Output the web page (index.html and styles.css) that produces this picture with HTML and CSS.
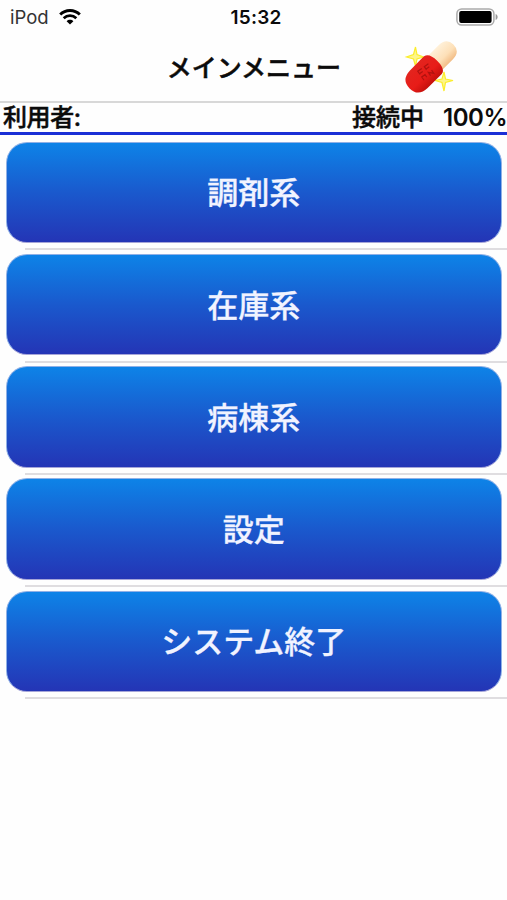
FILE: index.html
```
<!DOCTYPE html>
<html lang="ja">
<head>
    <meta charset="UTF-8">
    <meta name="viewport" content="width=device-width, initial-scale=1.0">
    <title>メインメニュー</title>
    <link rel="stylesheet" href="styles.css">
</head>
<body>
    <!-- ステータスバー -->
    <div class="status-bar">
        <div class="carrier">
            <span>iPod</span>
            <svg class="wifi" width="22" height="16" viewBox="0 0 22 16">
                <path d="M1.2 5.6C6.5 .1 15.5 .1 20.8 5.6" fill="none" stroke="#000" stroke-width="2.9"/>
                <path d="M4.7 9.3C8.2 5.8 13.8 5.8 17.3 9.3" fill="none" stroke="#000" stroke-width="2.7"/>
                <path d="M7.6 12.2C9.5 10.4 12.5 10.4 14.4 12.2L11 15.6Z"/>
            </svg>
        </div>
        <span class="clock">15:32</span>
        <svg class="battery" width="43" height="18" viewBox="0 0 43 18">
            <rect x=".9" y=".9" width="37" height="16.2" rx="4.8" fill="#fff" stroke="#aaa" stroke-width="1.5"/>
            <rect x="3.2" y="3" width="32.4" height="12" rx="2"/>
            <path d="M39.6 6C42.3 7 42.3 11 39.6 12Z" fill="#999"/>
        </svg>
    </div>

    <!-- タイトル -->
    <header class="header">
        <h1 class="title">メインメニュー</h1>
        <svg class="capsule" width="56" height="54" viewBox="0 0 56 54">
            <defs>
                <linearGradient id="cream" x1="0" y1="0" x2="0" y2="1">
                    <stop offset="0" stop-color="#fff0d8"/>
                    <stop offset=".6" stop-color="#fde0b8"/>
                    <stop offset="1" stop-color="#f2bd86"/>
                </linearGradient>
                <linearGradient id="red" x1="0" y1="0" x2="0" y2="1">
                    <stop offset="0" stop-color="#e3241e"/>
                    <stop offset=".6" stop-color="#e81c18"/>
                    <stop offset="1" stop-color="#c4100c"/>
                </linearGradient>
            </defs>
            <path class="star" d="M12.5 6L14 13.5L20.5 16L14 18L12.5 25L10.5 18L3.5 16L10.5 13.5Z"/>
            <path class="star" d="M41 31L42.5 38L50 39.5L42.5 41.5L41 50L39 41.5L32 39.5L39 38Z"/>
            <g transform="translate(28.5 25.5) rotate(-45)">
                <path d="M0 -10H20Q31 -10 31 0Q31 10 20 10H0Z" fill="url(#cream)"/>
                <path d="M-1 -12.5H2Q8 -11 8 0Q8 12 2 12.5H-18Q-31 12 -31 0Q-31 -12 -18 -12.5Z" fill="url(#red)"/>
                <path d="M-14 0V-4H-9M-14 -1H-10M-6 0V-4H-1M-6 -1H-2M-14 7V3H-10V6M-6 7V3L-2 7V3" transform="rotate(10)" fill="none" stroke="#b0120f" stroke-width="1.2"/>
            </g>
        </svg>
    </header>

    <div class="user-bar">
        <span class="user">利用者:</span>
        <span class="connection">接続中</span>
        <span class="charge">100%</span>
    </div>

    <!-- メニュー -->
    <main class="menu">
        <div class="menu-row"><button class="menu-button">調剤系</button></div>
        <div class="menu-row"><button class="menu-button">在庫系</button></div>
        <div class="menu-row"><button class="menu-button">病棟系</button></div>
        <div class="menu-row"><button class="menu-button">設定</button></div>
        <div class="menu-row"><button class="menu-button">システム終了</button></div>
    </main>
</body>
</html>
```
FILE: styles.css
```
* {
    box-sizing: border-box;
}
body {
    margin: 0;
    min-height: 100vh;
    background-color: #fefefe;
    color: #0b0b0b;
    font-family: Inter, "Noto Sans CJK JP", sans-serif;
}
.status-bar {
    display: grid;
    grid-template-columns: 1fr auto 1fr;
    align-items: center;
    height: 34px;
    padding: 0 8px 0 10px;
}
.carrier {
    display: flex;
    align-items: center;
    gap: 10px;
    font-size: 18.5px;
    color: #333;
}
.wifi {
    margin-top: -1px;
}
.clock {
    font-size: 19px;
    font-weight: 600;
    letter-spacing: 0.2px;
    padding-left: 3px;
}
.battery {
    justify-self: end;
}
.header {
    display: grid;
    grid-template-columns: 1fr auto 1fr;
    align-items: center;
    height: 69px;
    border-bottom: 2px solid #d8d8d8;
}
.title {
    grid-column: 2;
    margin: 0;
    padding: 2px 0 0 1px;
    font-size: 25px;
    font-weight: 500;
    line-height: 65px;
    -webkit-text-stroke: 0.5px;
}
.capsule {
    margin: 1px 0 0 62px;
}
.star {
    fill: #fdf58a;
    stroke: #fbed2c;
    stroke-width: 1.2;
}
/* 利用者と接続状態 */
.user-bar {
    display: flex;
    align-items: center;
    height: 32px;
    padding-left: 3px;
    border-bottom: 3px solid #1a2fd6;
    font-size: 24px;
    font-weight: 500;
    line-height: 28px;
    white-space: nowrap;
    -webkit-text-stroke: 0.5px;
}
.user {
    letter-spacing: -0.4px;
}
.connection {
    margin-left: auto;
}
.charge {
    margin-left: 19px;
    font-weight: 600;
    -webkit-text-stroke: 0;
    letter-spacing: -0.5px;
}
.menu-row {
    position: relative;
    height: 112.3px;
    padding: 6.5px 5.5px 0 6px;
}
/* 左側を空けた区切り線 */
.menu-row::after {
    content: "";
    position: absolute;
    left: 25px;
    right: 0;
    bottom: -3px;
    height: 2px;
    background-color: #dfdde0;
}
.menu-button {
    display: block;
    width: 100%;
    height: 101.5px;
    padding: 0 0 3px;
    border: 1px solid #8fb0e6;
    border-bottom-color: #a5a5d8;
    border-radius: 21px;
    background: linear-gradient(#0d84e8, #1a59cd 50%, #2434b5) border-box;
    color: #f1f3ff;
    font-family: inherit;
    font-size: 31px;
    font-weight: 500;
    -webkit-text-stroke: 0.3px;
}
```
